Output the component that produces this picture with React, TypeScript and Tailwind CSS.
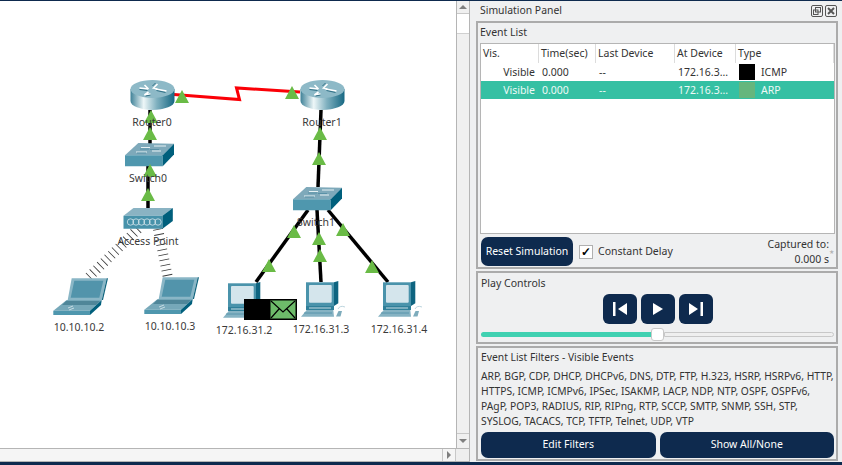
import React from 'react'

const Triangle = ({ x, y }: { x: number; y: number }) => (
  <polygon points={`${x},${y + 13} ${x + 7},${y} ${x + 14},${y + 13}`} fill="#6abb46" />
)

const Router = ({ x, y, id }: { x: number; y: number; id: string }) => (
  <g transform={`translate(${x} ${y})`}>
    <defs>
      <linearGradient id={id} x1="0" x2="1" y1="0" y2="0">
        <stop offset="0" stopColor="#3f8298" />
        <stop offset="0.3" stopColor="#eef7f8" />
        <stop offset="0.6" stopColor="#7fb0bf" />
        <stop offset="1" stopColor="#176883" />
      </linearGradient>
    </defs>
    <path d="M0 9 V21 A22 9 0 0 0 44 21 V9 Z" fill={`url(#${id})`} />
    <ellipse cx="22" cy="9" rx="22" ry="9" fill="#8db9c7" />
    <path d="M9 8 L18 9 M14 5 L18 9 M27 4 L23 8 L27 9 M25 9 L36 11 M18 12 L14 15 L20 14" stroke="#ffffff" strokeWidth="1.6" fill="none" />
    <path d="M9 9.5 L17 10.5 M26 10.5 L35 12.5 M15 16 L20 15 M22 6 L25 3" stroke="#155a72" strokeWidth="0.8" fill="none" />
  </g>
)

const SwitchBox = ({ x, y }: { x: number; y: number }) => (
  <g transform={`translate(${x} ${y})`}>
    <polygon points="0,12.3 13.3,0 49,0.7 37.7,12.3" fill="#7ea9ba" />
    <polygon points="0,12.3 37.7,12.3 37.7,23.3 0,23.3" fill="#4f97ae" />
    <polygon points="37.7,12.3 49,0.7 49,11.5 37.7,23.3" fill="#005f7c" />
    <path d="M16 4.5 H25 M29 3 H41 M11 9 H22 M27 8 H36" stroke="#e6f1f4" strokeWidth="1" fill="none" />
    <path d="M15 6 H24 M12 10 H21 M25 6.5 H34" stroke="#4f8ca2" strokeWidth="0.8" fill="none" />
  </g>
)

const AccessPoint = ({ x, y }: { x: number; y: number }) => (
  <g transform={`translate(${x} ${y})`}>
    <polygon points="0,7.7 10,0 49.3,0 39,7.7" fill="#8ab3c3" />
    <polygon points="0,7.7 39,7.7 39,20.7 0,20.7" fill="#4792aa" />
    <polygon points="39,7.7 49.3,0 49.3,13 39,20.7" fill="#005f7c" />
    {[7, 12.5, 18, 23.5, 29, 34.5].map((cx) => (
      <ellipse key={cx} cx={cx} cy="14" rx="3.2" ry="3.2" fill="none" stroke="#d5e6ec" strokeWidth="0.8" />
    ))}
  </g>
)

const Laptop = ({ x, y }: { x: number; y: number }) => (
  <g transform={`translate(${x} ${y})`}>
    <polygon points="18.7,1.3 53.7,1.3 48.7,23 14.7,23" fill="#8ab6c6" />
    <polygon points="53.7,1.3 55,1.3 50,23 48.7,23" fill="#11657f" />
    <polygon points="21.3,3.7 50.3,3.7 46.3,20.7 17.7,20.7" fill="#5294ab" />
    <polygon points="13.7,23 48.7,23 37,33.7 0.3,33.7" fill="#76a8b9" />
    <polygon points="13,24 47,24 43,28 9,28" fill="#4f8699" />
    <polygon points="0.3,33.7 37,33.7 37,38 0.3,38" fill="#4f97ae" />
    <polygon points="37,33.7 48.7,23 48,28 37,38" fill="#005f7c" />
    <path d="M15 31 L20 29 M16 33 L21 31" stroke="#dce9ee" strokeWidth="0.8" />
  </g>
)

const Pc = ({ x, y }: { x: number; y: number }) => (
  <g transform={`translate(${x} ${y})`}>
    <rect x="5" y="2.3" width="28" height="23.7" fill="#4a93ab" />
    <polygon points="33,2.3 37.3,1 37.3,23.3 33,26" fill="#0e6480" />
    <rect x="8" y="5" width="22.7" height="17.7" rx="1" fill="#d4e5ec" />
    <rect x="5" y="26" width="28" height="4" fill="#2f7f99" />
    <rect x="8" y="27.5" width="22" height="1" fill="#c6dbe3" />
    <polygon points="5.7,30 32.3,30 33,36.7 0,36.7" fill="#86b3c3" />
    <path d="M3 33 H31" stroke="#4c8ea5" strokeWidth="0.8" />
    <path d="M35 36.5 L37.5 31 H41 L39.5 36.5 Z" fill="#7eacbc" />
    <path d="M37 29 Q39 25 44 27" stroke="#bcd5de" strokeWidth="1" fill="none" />
  </g>
)

const Label = ({ className, children }: { className: string; children: React.ReactNode }) => (
  <span className={`absolute -translate-x-1/2 -translate-y-1/2 whitespace-nowrap text-[10.5px] leading-none text-[#3a3a3a] ${className}`}>
    {children}
  </span>
)

const Canvas = () => (
  <div className="relative flex-1 overflow-hidden bg-white">
    <svg width="456" height="447" viewBox="0 1 456 447" className="absolute left-0 top-0">
      <g stroke="#000000" strokeWidth="3.5" fill="none">
        <path d="M150 110 V145" />
        <path d="M148 166 V208" />
        <path d="M321 110 L318 187" />
        <path d="M308 210 L256 282" />
        <path d="M317 210 L321 282" />
        <path d="M328 210 L388 282" />
      </g>
      <g stroke="#3a3a3a" strokeWidth="10" strokeDasharray="0.8 4.4" fill="none">
        <path d="M138 229 L88 278" />
        <path d="M158 229 L168 278" />
      </g>
      <path d="M174 94.5 L239.5 99.5 L236.5 88 L300 92" stroke="#fb0007" strokeWidth="3" fill="none" />
      <Router x={130.5} y={80} id="routerA" />
      <Router x={300.5} y={80} id="routerB" />
      <SwitchBox x={125} y={143} />
      <SwitchBox x={293} y={187} />
      <AccessPoint x={123.5} y={208} />
      <Laptop x={53} y={277} />
      <Laptop x={144} y={276} />
      <Pc x={223} y={281} />
      <Pc x={301} y={280} />
      <Pc x={378} y={280} />
      <Triangle x={175} y={90} />
      <Triangle x={144} y={110} />
      <Triangle x={143} y={127} />
      <Triangle x={143} y={164} />
      <Triangle x={141} y={188} />
      <Triangle x={285} y={86} />
      <Triangle x={313} y={127} />
      <Triangle x={312} y={152} />
      <Triangle x={287} y={225} />
      <Triangle x={312} y={232} />
      <Triangle x={336} y={223} />
      <Triangle x={262} y={259} />
      <Triangle x={313} y={249} />
      <Triangle x={365} y={260} />
      {/* packet */}
      <rect x="244" y="299" width="53" height="21" fill="#000000" />
      <rect x="270.5" y="300.5" width="25" height="18" fill="#6dbb6a" />
      <path d="M271 301 L283 312 L295 301 M271 318 L279 309 M295 318 L287 309" stroke="#000000" strokeWidth="1.2" fill="none" />
    </svg>
    <Label className="left-[152px] top-[121px]">Router0</Label>
    <Label className="left-[322px] top-[121px]">Router1</Label>
    <Label className="left-[148px] top-[177px]">Switch0</Label>
    <Label className="left-[316px] top-[221px]">Switch1</Label>
    <Label className="left-[148px] top-[240px]">Access Point</Label>
    <Label className="left-[79px] top-[326px]">10.10.10.2</Label>
    <Label className="left-[170px] top-[325px]">10.10.10.3</Label>
    <Label className="left-[244px] top-[329px]">172.16.31.2</Label>
    <Label className="left-[321px] top-[328px]">172.16.31.3</Label>
    <Label className="left-[399px] top-[328px]">172.16.31.4</Label>
  </div>
)

const VerticalScrollbar = () => (
  <div className="flex w-[14px] flex-col border-x border-[#b5b5b5] bg-[#f0f0f0]">
    <div className="flex h-[13px] items-center justify-center border-b border-[#c8c8c8]">
      <span className="h-0 w-0 border-x-[4px] border-b-[4px] border-x-transparent border-b-[#7f7f7f]" />
    </div>
    <div className="h-[20px] border-b border-[#d0d0d0] bg-white" />
    <div className="flex-1" />
    <div className="flex h-[15px] items-center justify-center border-t border-[#c8c8c8]">
      <span className="h-0 w-0 border-x-[4px] border-t-[4px] border-x-transparent border-t-[#7f7f7f]" />
    </div>
  </div>
)

const HorizontalScrollbar = () => (
  <div className="flex h-[14px] border-y border-[#b5b5b5] bg-[#f5f5f5]">
    <div className="flex-1" />
    <div className="flex w-[14px] items-center justify-center border-x border-[#c8c8c8]">
      <span className="h-0 w-0 border-y-[4px] border-l-[4px] border-y-transparent border-l-[#7f7f7f]" />
    </div>
    <div className="w-[14px] border-r border-[#b5b5b5] bg-[#eeeeee]" />
  </div>
)

const columns = [
  { name: 'Vis.', width: 'w-[58px]' },
  { name: 'Time(sec)', width: 'w-[57px]' },
  { name: 'Last Device', width: 'w-[79px]' },
  { name: 'At Device', width: 'w-[61px]' },
  { name: 'Type', width: 'flex-1' },
]

const EventRow = ({ type, swatch, selected }: { type: string; swatch: string; selected?: boolean }) => (
  <div className={`flex h-[18px] items-center text-[10.5px] ${selected ? 'bg-[#35c0a3] text-[#eef9f6]' : 'bg-white text-[#333333]'}`}>
    <span className="w-[54px] pt-[1px] text-right">Visible</span>
    <span className="ml-[7px] w-[57px] pt-[1px]">0.000</span>
    <span className="w-[79px] pt-[1px]">--</span>
    <span className="w-[61px] pt-[1px]">172.16.3...</span>
    <span className={`h-[16px] w-[16px] ${swatch}`} />
    <span className="ml-[6px] pt-[1px]">{type}</span>
  </div>
)

const EventList = () => (
  <section className="flex h-[248px] flex-col border-2 border-[#ababab] bg-[#eff0f1] pl-[2px] pr-[1px]">
    <div className="flex h-[20px] items-center text-[10.5px] text-[#333333]">Event List</div>
    <div className="flex flex-1 flex-col border border-[#b5b5b5] bg-white">
      <div className="flex h-[19px] text-[10.5px] text-[#333333]">
        {columns.map((col) => (
          <div key={col.name} className={`flex items-center border-r border-[#dcdcdc] pl-[2px] ${col.width}`}>
            {col.name}
          </div>
        ))}
      </div>
      <EventRow type="ICMP" swatch="bg-black" />
      <EventRow type="ARP" swatch="bg-[#65b67d]" selected />
    </div>
    <div className="flex h-[33px] items-center pl-[1px] pt-[2px]">
      <button className="h-[29px] w-[92px] rounded-[7px] bg-[#0e2a4e] text-[10.5px] text-white">Reset Simulation</button>
      <span className="ml-[6px] flex h-[14px] w-[14px] items-center justify-center border border-[#b0b0b0] bg-white text-[12px] font-bold leading-none text-black">✓</span>
      <span className="ml-[5px] text-[10.5px] text-[#333333]">Constant Delay</span>
      <div className="ml-auto text-right text-[10.5px] leading-[15px] text-[#333333]">
        <div>Captured to:</div>
        <div>0.000 s</div>
      </div>
      <span className="w-[6px] text-[6px] leading-none text-[#b5b5b5]">★</span>
    </div>
  </section>
)

const PlayControls = () => (
  <section className="flex h-[73px] flex-col border-2 border-[#ababab] bg-[#eff0f1] pl-[3px] pr-[2px]">
    <div className="flex h-[21px] items-center text-[10.5px] text-[#333333]">Play Controls</div>
    <div className="flex justify-center gap-[4px]">
      <button className="flex h-[30px] w-[34px] items-center justify-center rounded-[6px] bg-[#0e2a4e]">
        <svg width="16" height="16" viewBox="0 0 16 16"><path d="M1 1 H3.5 V15 H1 Z M15 2 V14 L6 8 Z" fill="#ffffff" /></svg>
      </button>
      <button className="flex h-[30px] w-[34px] items-center justify-center rounded-[6px] bg-[#0e2a4e]">
        <svg width="12" height="14" viewBox="0 0 12 14"><path d="M1 1 V13 L11 7 Z" fill="#ffffff" /></svg>
      </button>
      <button className="flex h-[30px] w-[34px] items-center justify-center rounded-[6px] bg-[#0e2a4e]">
        <svg width="16" height="16" viewBox="0 0 16 16"><path d="M1 2 V14 L10 8 Z M12.5 1 H15 V15 H12.5 Z" fill="#ffffff" /></svg>
      </button>
    </div>
    <div className="mt-[4px] flex h-[13px] items-center">
      <div className="h-[5px] w-[170px] rounded-l-full bg-[#40d1b1]" />
      <div className="h-[13px] w-[13px] shrink-0 rounded-[3px] border border-[#c8c8c8] bg-white" />
      <div className="h-[5px] flex-1 rounded-r-full border border-[#c8c8c8] bg-[#efefef]" />
    </div>
  </section>
)

const Filters = () => (
  <section className="flex h-[115px] flex-col border-2 border-[#ababab] bg-[#eff0f1] pl-[3px] pr-[2px]">
    <div className="flex h-[19px] items-center text-[10.3px] text-[#333333]">Event List Filters - Visible Events</div>
    <p className="pt-[2px] text-[10.3px] leading-[15px] whitespace-pre text-[#333333]">
      {'ARP, BGP, CDP, DHCP, DHCPv6, DNS, DTP, FTP, H.323, HSRP, HSRPv6, HTTP,\nHTTPS, ICMP, ICMPv6, IPSec, ISAKMP, LACP, NDP, NTP, OSPF, OSPFv6,\nPAgP, POP3, RADIUS, RIP, RIPng, RTP, SCCP, SMTP, SNMP, SSH, STP,\nSYSLOG, TACACS, TCP, TFTP, Telnet, UDP, VTP'}
    </p>
    <div className="mt-[3px] flex gap-[4px]">
      <button className="h-[26px] flex-1 rounded-[7px] bg-[#0e2a4e] text-[10.5px] text-white">Edit Filters</button>
      <button className="h-[26px] flex-1 rounded-[7px] bg-[#0e2a4e] text-[10.5px] text-white">Show All/None</button>
    </div>
  </section>
)

const SimulationPanel = () => (
  <aside className="flex w-[372px] flex-col bg-[#eff0f1] pl-[6px] pr-[4px]">
    <header className="flex h-[20px] items-center justify-between pl-[4px] text-[10.4px] text-[#333333]">
      <span>Simulation Panel</span>
      <span className="flex gap-[2px] pr-[1px]">
        <svg width="12" height="12" viewBox="0 0 12 12" fill="none" stroke="#555555">
          <rect x="0.5" y="0.5" width="11" height="11" rx="1.5" />
          <rect x="4.5" y="2.5" width="5" height="4.5" />
          <rect x="2.5" y="5" width="4.5" height="4.5" />
        </svg>
        <svg width="12" height="12" viewBox="0 0 12 12" fill="none" stroke="#555555">
          <rect x="0.5" y="0.5" width="11" height="11" rx="1.5" />
          <path d="M3 3 L9 9 M9 3 L3 9" strokeWidth="1.9" />
        </svg>
      </span>
    </header>
    <div className="flex flex-col gap-[2px]">
      <EventList />
      <PlayControls />
      <Filters />
    </div>
  </aside>
)

export default function App() {
  return (
    <div className="flex h-[465px] w-[842px] flex-col overflow-hidden bg-[#eff0f1] font-['Noto_Sans',sans-serif]">
      <div className="h-[1px] bg-[#0e2a4e]" />
      <div className="flex flex-1">
        <div className="flex w-[470px] flex-col">
          <div className="flex flex-1">
            <Canvas />
            <VerticalScrollbar />
          </div>
          <HorizontalScrollbar />
        </div>
        <SimulationPanel />
      </div>
      <div className="h-[3px] bg-[#0e2a4e]" />
    </div>
  )
}
